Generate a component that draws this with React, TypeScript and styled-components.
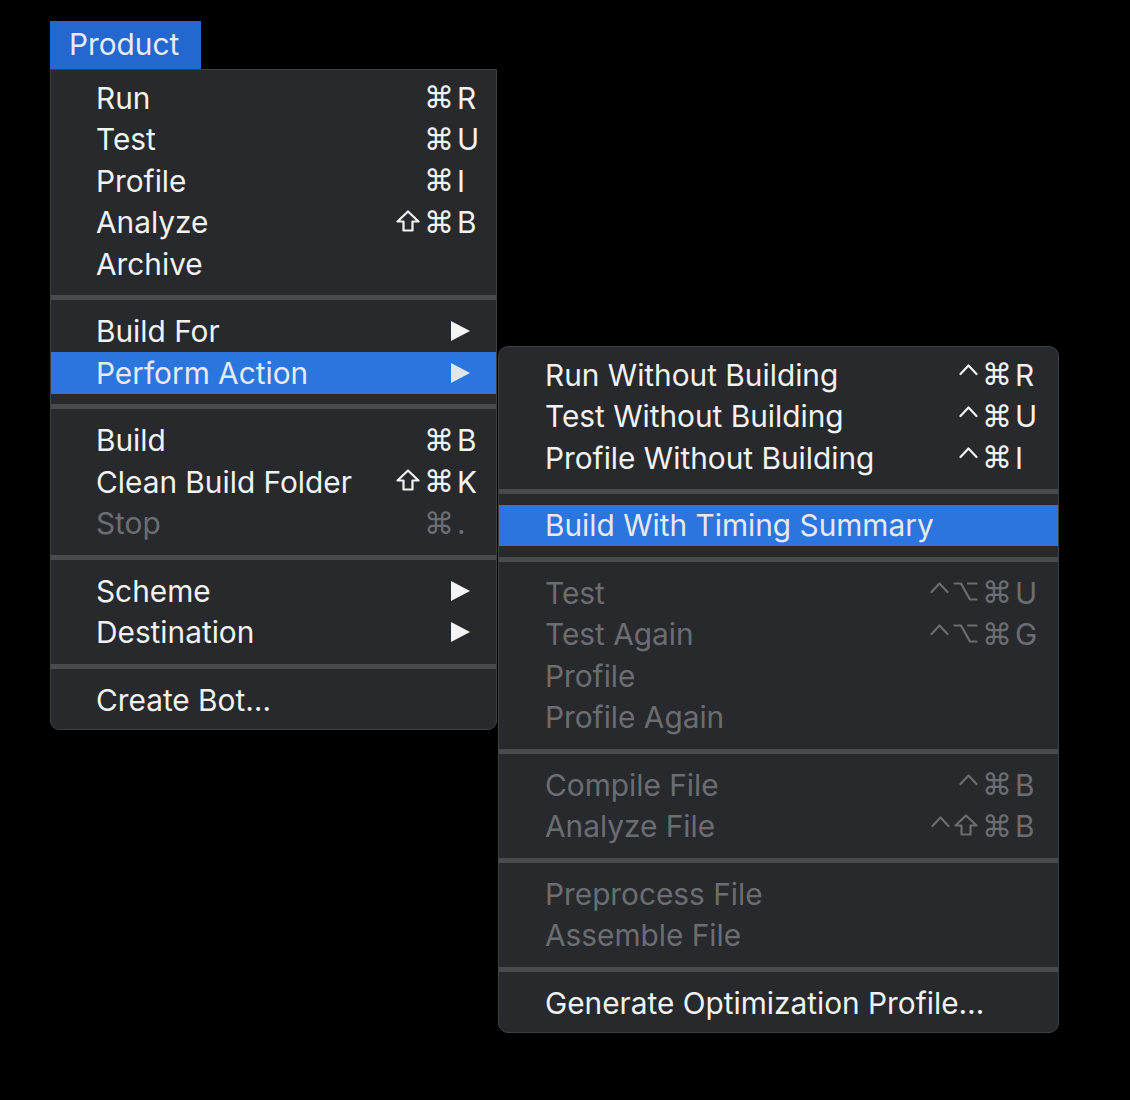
import React from "react";
import styled, { createGlobalStyle } from "styled-components";

const Global = createGlobalStyle`
  html, body { margin: 0; padding: 0; background: #000; }
  body { font-family: Inter, "Noto Sans", sans-serif; -webkit-font-smoothing: antialiased; }
`;

type Mod = "ctrl" | "opt" | "shift" | "cmd";

type Item = {
  label: string;
  mods?: Mod[];
  keyChar?: string;
  disabled?: boolean;
  selected?: boolean;
  submenu?: boolean;
};

const mainSections: Item[][] = [
  [
    { label: "Run", mods: ["cmd"], keyChar: "R" },
    { label: "Test", mods: ["cmd"], keyChar: "U" },
    { label: "Profile", mods: ["cmd"], keyChar: "I" },
    { label: "Analyze", mods: ["shift", "cmd"], keyChar: "B" },
    { label: "Archive" },
  ],
  [
    { label: "Build For", submenu: true },
    { label: "Perform Action", submenu: true, selected: true },
  ],
  [
    { label: "Build", mods: ["cmd"], keyChar: "B" },
    { label: "Clean Build Folder", mods: ["shift", "cmd"], keyChar: "K" },
    { label: "Stop", mods: ["cmd"], keyChar: ".", disabled: true },
  ],
  [
    { label: "Scheme", submenu: true },
    { label: "Destination", submenu: true },
  ],
  [{ label: "Create Bot…" }],
];

const subSections: Item[][] = [
  [
    { label: "Run Without Building", mods: ["ctrl", "cmd"], keyChar: "R" },
    { label: "Test Without Building", mods: ["ctrl", "cmd"], keyChar: "U" },
    { label: "Profile Without Building", mods: ["ctrl", "cmd"], keyChar: "I" },
  ],
  [{ label: "Build With Timing Summary", selected: true }],
  [
    { label: "Test", mods: ["ctrl", "opt", "cmd"], keyChar: "U", disabled: true },
    { label: "Test Again", mods: ["ctrl", "opt", "cmd"], keyChar: "G", disabled: true },
    { label: "Profile", disabled: true },
    { label: "Profile Again", disabled: true },
  ],
  [
    { label: "Compile File", mods: ["ctrl", "cmd"], keyChar: "B", disabled: true },
    { label: "Analyze File", mods: ["ctrl", "shift", "cmd"], keyChar: "B", disabled: true },
  ],
  [
    { label: "Preprocess File", disabled: true },
    { label: "Assemble File", disabled: true },
  ],
  [{ label: "Generate Optimization Profile…" }],
];

const Page = styled.div`
  display: flex;
  align-items: flex-start;
  gap: 1px;
  padding: 21px 0 0 50px;
  min-height: 1079px;
  box-sizing: border-box;
`;

const MenuColumn = styled.div`
  display: flex;
  flex-direction: column;
  align-items: flex-start;
`;

const MenuTitle = styled.div`
  background: #2467cf;
  color: #e8ecf4;
  font-size: 29.8px;
  height: 48px;
  width: 151px;
  box-sizing: border-box;
  padding: 0 0 2px 19px;
  display: flex;
  align-items: center;
`;

const Panel = styled.div<{ $width: number; $sub?: boolean }>`
  width: ${(p) => p.$width}px;
  box-sizing: border-box;
  background: #28292d;
  border: 1px solid #3f4044;
  border-radius: ${(p) => (p.$sub ? "10px" : "0 0 9px 9px")};
  padding: 7px 0 8px;
  display: flex;
  flex-direction: column;
  overflow: hidden;
`;

const SubPanel = styled(Panel)`
  margin-top: 325px;
`;

const Separator = styled.div`
  height: 5px;
  background: #4a4b4e;
  margin: 10.5px 0;
`;

const Row = styled.div<{ $selected?: boolean; $disabled?: boolean; $left: number }>`
  height: 41.5px;
  display: flex;
  align-items: center;
  padding: 0 0 0 ${(p) => p.$left}px;
  font-size: 29.8px;
  background: ${(p) => (p.$selected ? "#2b75df" : "transparent")};
  color: ${(p) => (p.$disabled ? "#6c6d71" : p.$selected ? "#e6e9f0" : "#f2f2f2")};
`;

const Label = styled.span`
  flex: 1;
  white-space: nowrap;
`;

const Shortcut = styled.span`
  display: flex;
  align-items: center;
`;

const CmdGlyph = styled.span`
  font-family: "DejaVu Sans", Inter, sans-serif;
  font-size: 30px;
  margin-right: 3px;
`;

const ModIcon = styled.svg`
  height: 22px;
  margin: 0 4px 3px 0;
  fill: none;
  stroke: currentColor;
  stroke-width: 2.2;
  stroke-linejoin: round;
  stroke-linecap: round;
`;

const KeyChar = styled.span<{ $w: number }>`
  width: ${(p) => p.$w}px;
  text-align: left;
`;

const Arrow = styled.svg`
  width: 19px;
  height: 20px;
  margin-right: 26px;
`;

function ModSymbol({ mod }: { mod: Mod }) {
  if (mod === "cmd") return <CmdGlyph>⌘</CmdGlyph>;
  if (mod === "ctrl")
    return (
      <ModIcon viewBox="0 0 19 22" width={19}>
        <polyline points="1.5,12 9.5,3.5 17.5,12" />
      </ModIcon>
    );
  if (mod === "shift")
    return (
      <ModIcon viewBox="0 0 24 22" width={24}>
        <path d="M12 1.5 L22.5 11.5 H16.5 V20.5 H7.5 V11.5 H1.5 Z" />
      </ModIcon>
    );
  return (
    <ModIcon viewBox="0 0 25 22" width={25}>
      <path d="M1.5 3.5 H8 L17 19.5 H23.5 M15 3.5 H23.5" />
    </ModIcon>
  );
}

function MenuRow({ item, left, keyW }: { item: Item; left: number; keyW: number }) {
  return (
    <Row $selected={item.selected} $disabled={item.disabled} $left={left}>
      <Label>{item.label}</Label>
      {item.keyChar && (
        <Shortcut>
          {item.mods?.map((m) => (
            <ModSymbol key={m} mod={m} />
          ))}
          <KeyChar $w={keyW}>{item.keyChar}</KeyChar>
        </Shortcut>
      )}
      {item.submenu && (
        <Arrow viewBox="0 0 19 20">
          <polygon points="0,0 19,10 0,20" fill={item.selected ? "#e2e5ec" : "#f4f4f4"} />
        </Arrow>
      )}
    </Row>
  );
}

function Menu({ sections, left, keyW }: { sections: Item[][]; left: number; keyW: number }) {
  return (
    <>
      {sections.map((sec, i) => (
        <React.Fragment key={i}>
          {i > 0 && <Separator />}
          {sec.map((it) => (
            <MenuRow key={it.label} item={it} left={left} keyW={keyW} />
          ))}
        </React.Fragment>
      ))}
    </>
  );
}

export default function App() {
  return (
    <>
      <Global />
      <Page>
        <MenuColumn>
          <MenuTitle>Product</MenuTitle>
          <Panel $width={447}>
            <Menu sections={mainSections} left={45} keyW={39} />
          </Panel>
        </MenuColumn>
        <SubPanel $width={561} $sub>
          <Menu sections={subSections} left={46} keyW={43} />
        </SubPanel>
      </Page>
    </>
  );
}
